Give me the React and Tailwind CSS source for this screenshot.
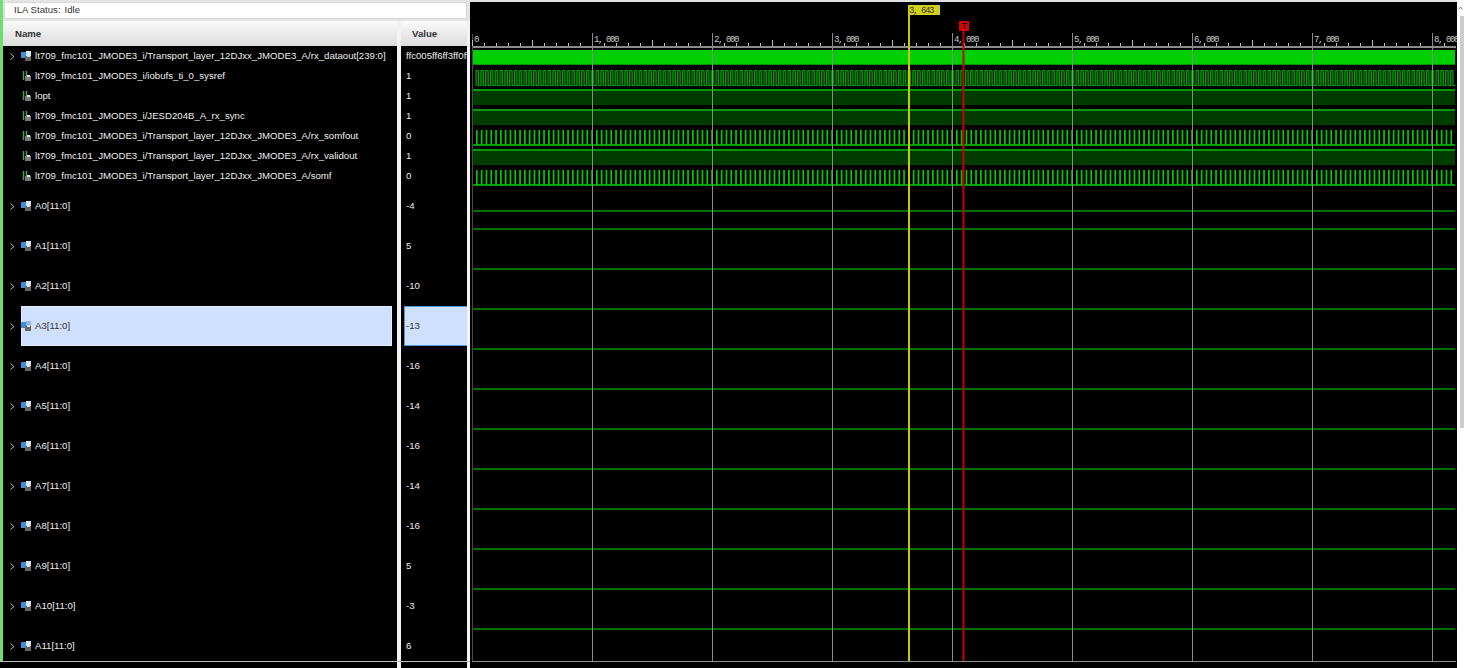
const names = [
  ["lt709_fmc101_JMODE3_i/Transport_layer_12DJxx_JMODE3_A/rx_dataout[239:0]", "ffc005ff6ff3ff0ff", true],
  ["lt709_fmc101_JMODE3_i/iobufs_ti_0_sysref", "1"],
  ["lopt", "1"],
  ["lt709_fmc101_JMODE3_i/JESD204B_A_rx_sync", "1"],
  ["lt709_fmc101_JMODE3_i/Transport_layer_12DJxx_JMODE3_A/rx_somfout", "0"],
  ["lt709_fmc101_JMODE3_i/Transport_layer_12DJxx_JMODE3_A/rx_validout", "1"],
  ["lt709_fmc101_JMODE3_i/Transport_layer_12DJxx_JMODE3_A/somf", "0"],
];

const buses = [
  ["A0[11:0]", "-4"],
  ["A1[11:0]", "5"],
  ["A2[11:0]", "-10"],
  ["A3[11:0]", "-13"],
  ["A4[11:0]", "-16"],
  ["A5[11:0]", "-14"],
  ["A6[11:0]", "-16"],
  ["A7[11:0]", "-14"],
  ["A8[11:0]", "-16"],
  ["A9[11:0]", "5"],
  ["A10[11:0]", "-3"],
  ["A11[11:0]", "6"],
];

const SELECTED = "A3[11:0]";

function Chevron() {
  return (
    <svg width="5" height="7" viewBox="0 0 5 7" className="shrink-0">
      <path d="M0.5 0.5 L4 3.5 L0.5 6.5" fill="none" stroke="#b8b8b8" strokeWidth="1" />
    </svg>
  );
}

function BusIcon({ sel }) {
  return (
    <svg width="11" height="10" viewBox="0 0 11 10" className="shrink-0">
      <rect x="0" y="1" width="6" height="6" fill="#3f8fd8" />
      <rect x="5" y="0" width="5" height="5" fill={sel ? "#8fb8e0" : "#d6e8fa"} />
      <rect x="4" y="5" width="6" height="5" fill="#666666" />
      <rect x="6" y="4" width="3" height="2" fill="#dddddd" />
    </svg>
  );
}

function WireIcon() {
  return (
    <svg width="11" height="10" viewBox="0 0 11 10" className="shrink-0">
      <path d="M2.5 0 V9 M5.5 0 V5" stroke="#4f9a4f" strokeWidth="1.5" fill="none" />
      <rect x="4" y="5" width="6" height="5" fill="#7a7a7a" />
      <rect x="6" y="4" width="3" height="2" fill="#e0e0e0" />
    </svg>
  );
}

function NameRow({ name, bus, tall }) {
  const sel = name === SELECTED;
  return (
    <div className={`flex items-center ${tall ? "h-[40px]" : "h-[20px]"}`}>
      <div className="w-[18px] shrink-0 flex justify-end pr-[6px]">{bus && <Chevron />}</div>
      <div
        className={`flex-1 h-full mr-[5px] flex items-center gap-[3px] ${
          sel ? "bg-[#cfe0ff] shadow-[inset_0_0_0_1px_#e6eeff] text-[#333333]" : "text-[#eeeeee]"
        }`}
      >
        {bus ? <BusIcon sel={sel} /> : <WireIcon />}
        <span className="whitespace-nowrap">{name}</span>
      </div>
    </div>
  );
}

function ValueRow({ value, tall, sel }) {
  return (
    <div className={`flex ${tall ? "h-[40px]" : "h-[20px]"}`}>
      <div
        className={`w-full pl-[1px] flex items-center overflow-hidden whitespace-nowrap border-l ${
          sel
            ? "bg-[#cfe0ff] border-y border-[#4f9ad8] text-[#333333]"
            : "text-[#eeeeee] border-transparent"
        }`}
      >
        {value}
      </div>
    </div>
  );
}

const X0 = 473;
const X1 = 1455;
const W = X1 - X0;
const gridXs = [592, 712, 832, 952, 1072, 1192, 1312, 1432];
const labels = ["0", "1, 000", "2, 000", "3, 000", "4, 000", "5, 000", "6, 000", "7, 000", "8, 000"];
const traces = [211, 229, 269, 309, 349, 389, 429, 469, 509, 549, 589, 629];
const pulses = [];
for (let x = X0 + 3; x < X1 - 1; x += 4.8) pulses.push(x);
const ticks = [];
for (let x = 472; x < 1456; x += 12) ticks.push(x);

const rulerFont = { fontFamily: "'Liberation Mono', monospace", fontSize: 9, letterSpacing: -1.4 };

// wave rows, all in page coordinates (viewBox starts at the panel corner)
function Waves() {
  return (
    <div className="shrink-0 pt-[2px] bg-[#e0e0e0]">
      <svg width="987" height="666" viewBox="470 2 987 666" className="block" shapeRendering="crispEdges">
        <rect x="470" y="2" width="987" height="666" fill="#000000" />

        {/* ruler */}
        <rect x="472" y="46" width="984" height="2" fill="#8c8c8c" />
        <rect x="472" y="34" width="1" height="628" fill="#4a4a4a" />
        {ticks.map((x, i) => (
          <rect
            key={x}
            x={x}
            y={i % 5 === 0 ? 40 : 43}
            width="1"
            height={i % 5 === 0 ? 6 : 3}
            fill="#c0c0c0"
          />
        ))}
        {labels.map((t, i) => (
          <text key={t} x={474 + i * 120} y="42" fill="#c8c8c8" style={rulerFont} shapeRendering="auto">
            {t}
          </text>
        ))}

        {/* rx_dataout */}
        <rect x={X0} y="50" width={W} height="15" fill="#00d000" />
        <rect x={X0} y="64" width={W} height="1" fill="#009000" />

        {/* sysref clock */}
        {pulses.map((x) => (
          <g key={x} shapeRendering="auto">
            <rect x={x} y="70" width="2.6" height="16" fill="#004000" />
            <path
              d={`M${x} 86 V70.5 H${x + 2.6} V85.5 H${x + 4.8}`}
              fill="none"
              stroke="#00b000"
              strokeWidth="1"
            />
          </g>
        ))}

        {/* solid high signals */}
        {[90, 110, 150].map((y) => (
          <g key={y}>
            <rect x={X0} y={y} width={W} height="15" fill="#003c00" />
            <rect x={X0} y={y - 1} width={W} height="2" fill="#009a00" />
          </g>
        ))}

        {/* somf pulses */}
        {[129, 169].map((y) => (
          <g key={y}>
            <rect x={X0} y={y + 15} width={W} height="2" fill="#009a00" />
            {pulses.map((x) => (
              <rect key={x} x={x} y={y + 1} width="1.7" height="15" fill="#00cc00" shapeRendering="auto" />
            ))}
          </g>
        ))}

        {/* analog traces + grid */}
        {traces.map((y) => (
          <rect key={y} x={X0} y={y - 1} width={W} height="2" fill="#006e00" />
        ))}
        {gridXs.map((x) => (
          <rect key={x} x={x} y="33" width="1" height="628" fill="#8a8a8a" />
        ))}

        {/* bottom edge */}
        <rect x="472" y="661" width="984" height="1" fill="#8c8c8c" />

        {/* cursor */}
        <rect x="908" y="15" width="2" height="646" fill="#c8c800" />
        <rect x="908" y="5" width="32" height="10" fill="#d0d020" />
        <text x="909" y="13" fill="#3a3a00" style={rulerFont} shapeRendering="auto">
          3, 643
        </text>

        {/* trigger marker */}
        <rect x="962.5" y="30" width="2" height="631" fill="#c80000" shapeRendering="auto" />
        <rect x="959" y="21" width="10" height="10" fill="#d80000" />
        <text x="961.5" y="29" fill="#1a0000" style={{ ...rulerFont, letterSpacing: 0 }} fontWeight="700" shapeRendering="auto">
          T
        </text>
      </svg>
    </div>
  );
}

export default function App() {
  return (
    <div className="w-[1464px] h-[668px] overflow-hidden flex bg-white font-['Liberation_Sans',Arial,sans-serif] text-[9.65px]">
      <div className="w-[470px] shrink-0 flex flex-col">
        <div className="flex flex-1 min-h-0">
          <div className="w-[3px] shrink-0 bg-[#6fe06f]" />
          <div className="flex-1 min-w-0 flex flex-col bg-[#e4e4e4] pt-[2px]">
            {/* status */}
            <div className="h-[17px] shrink-0 mr-[3px] ml-[1px] bg-white border border-[#d8d8d8] flex items-center gap-[4px] pl-[9px] text-[#333333]">
              <span>ILA Status:</span>
              <span>Idle</span>
            </div>
            <div className="flex-1 flex min-h-0 mt-[2px]">
              {/* name column */}
              <div className="w-[394px] shrink-0 flex flex-col min-h-0">
                <div className="h-[25px] shrink-0 bg-gradient-to-b from-[#fafafa] to-[#dcdcdc] flex items-center pl-[12px] pt-[1px] font-bold text-[#333333]">
                  Name
                </div>
                <div className="flex-1 min-h-0 bg-black overflow-hidden">
                  {names.map(([n, , bus]) => (
                    <NameRow key={n} name={n} bus={bus} />
                  ))}
                  {buses.map(([n]) => (
                    <NameRow key={n} name={n} bus tall />
                  ))}
                </div>
              </div>
              <div className="w-[4px] shrink-0 bg-[#f2f2f2]" />
              {/* value column */}
              <div className="w-[66px] shrink-0 flex flex-col min-h-0">
                <div className="h-[25px] shrink-0 bg-gradient-to-b from-[#fafafa] to-[#dcdcdc] flex items-center pl-[11px] pt-[1px] font-bold text-[#333333]">
                  Value
                </div>
                <div className="flex-1 min-h-0 bg-black pl-[3px] overflow-hidden">
                  {names.map(([n, v]) => (
                    <ValueRow key={n} value={v} />
                  ))}
                  {buses.map(([n, v]) => (
                    <ValueRow key={n} value={v} tall sel={n === SELECTED} />
                  ))}
                </div>
              </div>
              <div className="w-[3px] shrink-0 bg-[#f4f4f4]" />
            </div>
          </div>
        </div>
        <div className="h-[7px] shrink-0 bg-black border-t border-[#bdbdbd] flex">
          <div className="w-[397px]" />
          <div className="w-[4px] bg-[#f2f2f2]" />
          <div className="w-[66px]" />
          <div className="w-[3px] bg-[#f4f4f4]" />
        </div>
      </div>
      <Waves />
      {/* scrollbar */}
      <div className="flex-1 flex flex-col items-end">
        <div className="h-[16px] w-full flex items-center justify-center">
          <svg width="5" height="4" viewBox="0 0 5 4">
            <path d="M0.5 3.5 L2.5 1 L4.5 3.5" fill="none" stroke="#777777" strokeWidth="1" />
          </svg>
        </div>
        <div className="h-[412px] w-[4px] bg-[#cccccc]" />
      </div>
    </div>
  );
}
